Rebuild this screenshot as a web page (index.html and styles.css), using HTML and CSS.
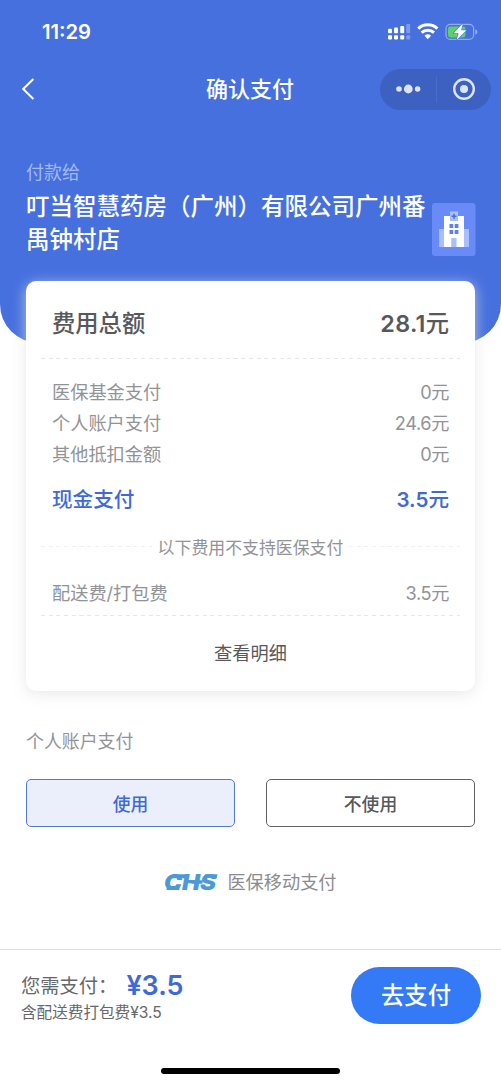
FILE: index.html
```html
<!DOCTYPE html>
<html lang="zh-CN">
<head>
<meta charset="utf-8">
<title>确认支付</title>
<link rel="stylesheet" href="styles.css">
</head>
<body>
<div class="page">
  <header class="hero">
    <div class="status">
      <span class="time">11:29</span>
      <svg class="status-icons" width="92" height="20" viewBox="0 0 92 20">
        <g fill="#fff">
          <rect x="1" y="8.8" width="4" height="4.4" rx="1"/><rect x="7" y="7.5" width="4" height="5.7" rx="1"/><rect x="13.2" y="6" width="4" height="7.2" rx="1"/>
          <rect x="1" y="15.2" width="4" height="4.3" rx="1"/><rect x="7" y="15.2" width="4" height="4.3" rx="1"/><rect x="13.2" y="15.2" width="4" height="4.3" rx="1"/>
          <g opacity=".3"><rect x="19.2" y="4" width="4" height="9.2" rx="1"/><rect x="19.2" y="15.2" width="4" height="4.3" rx="1"/></g>
        </g>
        <g fill="none" stroke="#fff" stroke-width="3">
          <path d="M31.2 8.6A14 14 0 0 1 50.4 8.6"/>
          <path d="M34.6 12.7A9 9 0 0 1 47 12.7"/>
        </g>
        <path d="M37.5 15.7A5 5 0 0 1 44.1 15.7L40.8 19.2Z" fill="#fff"/>
        <rect x="59" y="4.4" width="27.6" height="15" rx="4.2" fill="none" stroke="#fff" stroke-opacity=".42" stroke-width="1.2"/>
        <path d="M88.4 9.2q2 .5 2 2.7t-2 2.7z" fill="#fff" opacity=".45"/>
        <rect x="61" y="6.4" width="17.5" height="11" rx="2.4" fill="#5fd068"/>
        <path d="M75.8 3.4L66.6 13.2H71.6L69.6 20L79.4 10.2H74.200Z" fill="#fff" stroke="#4770df" stroke-width="1.2" paint-order="stroke"/>
      </svg>
    </div>
    <nav class="nav">
      <svg class="back" width="14" height="24" viewBox="0 0 14 24"><path d="M12.4 2L2.2 12L12.4 22" fill="none" stroke="#fff" stroke-width="2"/></svg>
      <h1 class="nav-title">确认支付</h1>
      <div class="capsule">
        <svg width="111" height="41" viewBox="0 0 111 41">
          <g fill="#dce4f8"><circle cx="19" cy="20" r="2.8"/><circle cx="28.3" cy="20" r="4.4"/><circle cx="37.6" cy="20" r="2.8"/><circle cx="84" cy="20" r="4"/></g>
          <path d="M56.5 7.5V33.5" stroke="#4a6dcb"/>
          <circle cx="84" cy="20" r="9.8" fill="none" stroke="#dce4f8" stroke-width="2.4"/>
        </svg>
      </div>
    </nav>
    <section class="payee">
      <div class="payee-text">
        <div class="payee-label">付款给</div>
        <div class="payee-name">叮当智慧药房（广州）有限公司广州番禺钟村店</div>
      </div>
      <svg class="hospital" width="44" height="53" viewBox="0 0 44 53">
        <rect width="43.5" height="53" rx="3" fill="#688bf8"/>
        <path d="M7 26h7v18H7zM30 26h7v18h-7z" fill="#a9bffd"/>
        <path d="M12 13h20v31H12z" fill="#fff"/>
        <path d="M18 8.5h8V18h-8z" fill="#a9bffd"/>
        <path d="M22 10.8v5M19.5 13.3h5" stroke="#4770df" stroke-width="1.6"/>
        <path d="M17.5 21h3.7v4h-3.7zM22.7 21h3.7v4h-3.7zM17.5 27h3.7v4h-3.7zM22.7 27h3.7v4h-3.7z" fill="#5d80ef"/>
        <path d="M19.2 35h5.3v9h-5.3z" fill="#a9bffd"/>
      </svg>
    </section>
  </header>

  <main class="content">
    <section class="card">
      <div class="row total"><span>费用总额</span><span><b>28.1</b>元</span></div>
      <div class="dash"></div>
      <div class="details">
        <div class="row"><span>医保基金支付</span><span class="num">0元</span></div>
        <div class="row"><span>个人账户支付</span><span class="num">24.6元</span></div>
        <div class="row"><span>其他抵扣金额</span><span class="num">0元</span></div>
      </div>
      <div class="row cash"><span>现金支付</span><span><b>3.5</b>元</span></div>
      <div class="divider"><i class="dash faint"></i><span>以下费用不支持医保支付</span><i class="dash faint"></i></div>
      <div class="row delivery"><span>配送费/打包费</span><span class="num">3.5元</span></div>
      <div class="dash"></div>
      <div class="more">查看明细</div>
    </section>

    <div class="account-label">个人账户支付</div>
    <div class="options">
      <button class="option selected">使用</button>
      <button class="option">不使用</button>
    </div>
    <div class="brand">
      <svg class="chs" width="54" height="24" viewBox="0 0 54 24">
        <text x="0" y="20" textLength="52" lengthAdjust="spacingAndGlyphs">CHS</text>
        <path d="M9 4.200H24l-.8 4H8.200zM28 10.200H39l-.7 3.600H27.300zM41 4.200H53.500l-.8 3.800H40.200zM3 16H16l-.8 4H2.500z"/>
      </svg>
      <span>医保移动支付</span>
    </div>
  </main>

  <footer class="footer">
    <div class="pay-bar">
      <div>
        <div class="due"><span>您需支付：</span><b>¥3.5</b></div>
        <div class="note">含配送费打包费¥3.5</div>
      </div>
      <button class="pay">去支付</button>
    </div>
    <div class="home"></div>
  </footer>
</div>
</body>
</html>
```
FILE: styles.css
```css
* { box-sizing: border-box; }
body { margin: 0; background: #fff; font-family: Inter, "Noto Sans CJK SC", sans-serif; color: #57585c; }
button { font: inherit; padding: 0; }
b { font-weight: 600; }
.page { width: 501px; height: 1085px; display: flex; flex-direction: column; overflow: hidden; }

.hero { height: 343px; flex: none; background: #4770df; border-radius: 0 0 39px 39px; color: #fff; }
.status { height: 64px; padding: 0 22px 0 42px; display: flex; justify-content: space-between; align-items: center; }
.time { font-size: 20.2px; font-weight: 600; line-height: 24px; }
.status-icons { margin: 0 0 4px; }
.nav { height: 50px; padding: 0 10px 0 21px; display: grid; grid-template-columns: 185px auto 1fr; align-items: center; }
.nav-title { margin: 0; font-size: 22px; font-weight: 500; line-height: 32px; }
.capsule { justify-self: end; width: 111px; height: 41px; border-radius: 21px; background: #3d61c0; }
.capsule svg { display: block; }
.payee { padding: 46px 25px 0 26px; display: flex; justify-content: space-between; }
.payee-text { width: 401px; }
.payee-label { font-size: 18px; line-height: 26px; color: #a3b8ef; }
.payee-name { margin-top: 4px; font-size: 23.5px; font-weight: 500; line-height: 33px; }
.hospital { margin-top: 43px; flex: none; }

.content { flex: 1; margin-top: -62px; padding: 0 26px; }
.card { width: 449px; height: 410px; padding: 0 15px; border-radius: 10px; background: #fff; box-shadow: 0 3px 14px rgba(225, 225, 225, .75); }
.row { display: flex; justify-content: space-between; align-items: center; padding: 0 11px; font-size: 18.2px; line-height: 31px; color: #929397; }
.num { letter-spacing: -.4px; }
.total { height: 77px; padding-top: 8px; font-size: 23.3px; font-weight: 500; color: #57585c; }
.total b { letter-spacing: .3px; }
.dash { display: block; height: 1px; background: repeating-linear-gradient(90deg, #e6e6e8 0 4px, transparent 4px 7.7px); }
.faint { flex: 1; opacity: .6; }
.details { padding-top: 18px; }
.cash { height: 59px; font-size: 20.6px; font-weight: 500; color: #4169d6; }
.divider { height: 35px; display: flex; align-items: center; gap: 6px; font-size: 16.9px; color: #929397; }
.delivery { height: 51px; padding-top: 7px; }
.more { height: 75px; line-height: 75px; text-align: center; font-size: 18.2px; color: #57585c; }

.account-label { margin-top: 38px; font-size: 17.9px; line-height: 26px; color: #929397; }
.options { margin-top: 24px; display: flex; justify-content: space-between; }
.option { width: 209px; height: 48px; border: 1.5px solid #606164; border-radius: 5px; background: #fff; color: #57585c; font-size: 17.8px; font-weight: 500; }
.selected { border-color: #5579d9; background: #eaeffb; color: #4169d6; }
.brand { margin-top: 42px; display: flex; justify-content: center; align-items: center; gap: 9px; font-size: 18.2px; line-height: 26px; color: #8b8c91; }
.chs { overflow: visible; fill: #4b9ad5; }
.chs text { font: italic 900 21px Inter, sans-serif; }

.footer { height: 136px; flex: none; border-top: 1px solid #dedee0; }
.pay-bar { height: 118px; padding: 17px 20px 0 21px; display: flex; justify-content: space-between; align-items: flex-start; }
.due { height: 36px; display: flex; align-items: center; font-size: 19.3px; color: #66676a; }
.due b { margin-left: 9px; font-size: 27px; color: #4169d6; }
.note { margin-top: 1px; font-size: 15.6px; line-height: 18px; color: #66676a; }
.pay { width: 130px; height: 57px; padding-bottom: 3px; border: 0; border-radius: 29px; background: #347af6; color: #fff; font-size: 23.3px; font-weight: 500; }
.home { width: 179px; height: 6px; margin: 0 auto; border-radius: 3px; background: #000; }
```
